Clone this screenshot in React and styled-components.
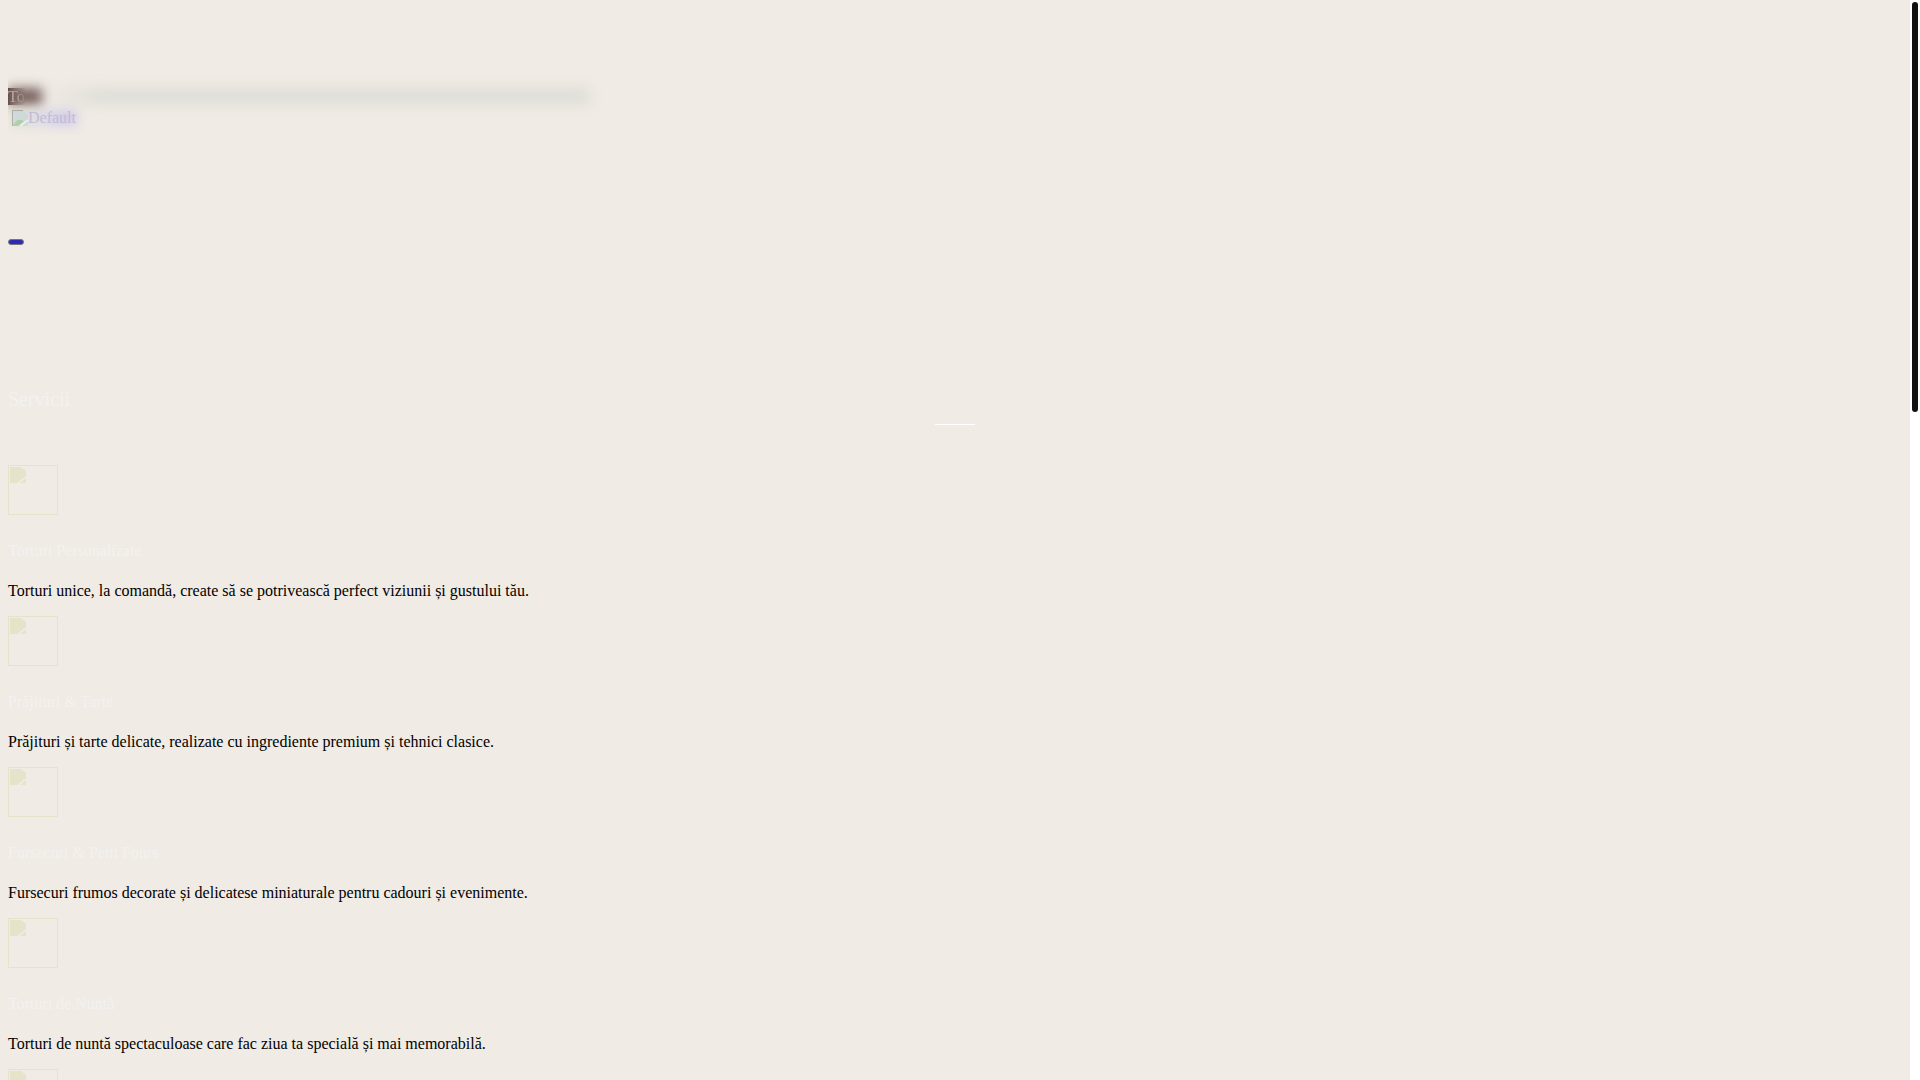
import React from "react";
import styled, { createGlobalStyle } from "styled-components";

const Global = createGlobalStyle`
  * { box-sizing: border-box; }
  body {
    margin: 0;
    background: #f0ebe4;
    color: #000;
    font: 16px/18px Times, "Liberation Serif", serif;
    overflow: hidden;
  }
`;
const Shell = styled.div`
  display: flex;
  height: 100vh;
  overflow: hidden;
`;
const Page = styled.div`
  flex: 1;
  min-width: 0;
  padding: 0 8px;
`;
const Rail = styled.div`
  width: 10px;
  padding: 2px;
  background: #fff;
`;
const Thumb = styled.div`
  height: 38vh;
  border-radius: 3px;
  background: #111;
`;
const Header = styled.header`
  height: 135px;
  padding-top: 88px;
  overflow: hidden;
`;
const TopLine = styled.div`
  display: grid;
  grid-template-columns: 34px 548px;
  height: 17px;
`;
const TagCell = styled.span`
  display: grid;
  & > * { grid-area: 1 / 1; }
`;
const TagGlow = styled.span`
  background: #77605c;
  filter: blur(6px);
`;
const TagBase = styled.span`
  width: 18px;
  background: linear-gradient(90deg, #5c403c, transparent);
`;
const Tag = styled.span`
  position: relative;
  line-height: 17px;
  color: #b3a9a4;
  mask-image: linear-gradient(90deg, #000 8px, transparent 20px);
`;
const Haze = styled.span`
  background: linear-gradient(90deg, transparent, #d3d4d0 60px);
  filter: blur(7px);
  opacity: 0.6;
`;
const Brand = styled.a`
  display: grid;
  grid-template-columns: 16px 48px;
  align-items: center;
  width: 64px;
  height: 18px;
  margin: 4px 0 0 4px;
  color: #c0bcd8;
  text-decoration: none;
`;
const BrandIcon = styled.svg`
  grid-area: 1 / 1;
  opacity: 0.6;
`;
const BrandGlow = styled.span`
  grid-area: 1 / 1 / 2 / 3;
  height: 14px;
  background: linear-gradient(90deg, #d3dfca 12px, #dcd8e6 24px, #c6c1e8);
  filter: blur(6px);
`;
const BrandText = styled.span`
  position: relative;
  grid-area: 1 / 2;
`;
const Main = styled.main`
  padding-top: 104px;
`;
const Pill = styled.button`
  display: block;
  width: 16px;
  height: 6px;
  padding: 0;
  border: 1px solid #76767a;
  border-radius: 3px;
  background: #3029b4;
`;
const Title = styled.h2`
  margin: 143px 0 0;
  font-size: 20px;
  line-height: 22px;
  font-weight: 400;
  color: #f3f2f1;
`;
const Rule = styled.hr`
  width: 40px;
  height: 1px;
  margin: 14px auto 40px;
  border: 0;
  background: #fff;
`;
const Service = styled.article`
  display: grid;
  gap: 22px;
  margin-bottom: 16px;
`;
const Frame = styled.div`
  width: 50px;
  height: 50px;
  margin-bottom: 5px;
  padding: 1px;
  border: 1px solid #e6e3cb;
  & > svg { display: block; }
`;
const Name = styled.h3`
  margin: 0;
  font-size: 16px;
  font-weight: 400;
  color: #f3f2f1;
`;
const Text = styled.p`
  margin: 0;
`;

const services = [
  ["Torturi Personalizate", "Torturi unice, la comandă, create să se potrivească perfect viziunii și gustului tău."],
  ["Prăjituri & Tarte", "Prăjituri și tarte delicate, realizate cu ingrediente premium și tehnici clasice."],
  ["Fursecuri & Petit Fours", "Fursecuri frumos decorate și delicatese miniaturale pentru cadouri și evenimente."],
  ["Torturi de Nuntă", "Torturi de nuntă spectaculoase care fac ziua ta specială și mai memorabilă."],
];

const ServiceIcon = () => (
  <Frame>
    <svg width="16" height="16" viewBox="0 0 16 16" aria-hidden="true">
      <path fill="#e6e3cb" d="M0 0h11l5 4v5L7 16H0zM16 11v5h-6z" />
    </svg>
  </Frame>
);

export default function App() {
  return (
    <Shell>
      <Global />
      <Page>
        <Header>
          <TopLine>
            <TagCell>
              <TagGlow />
              <TagBase />
              <Tag>To</Tag>
            </TagCell>
            <Haze />
          </TopLine>
          <Brand href="#">
            <BrandGlow />
            <BrandIcon width="16" height="16" viewBox="0 0 16 16" aria-hidden="true">
              <path fill="#c6d5dc" d="M0 0h11l5 5v11H0z" />
              <path fill="#8fc488" d="M1 15q4-6 8-5l3 1-6 5H1z" />
              <path fill="none" stroke="#8c8c8c" d="M0.500 16V0.500H11" />
              <path stroke="#fff" strokeWidth="1.500" d="M8 16l8-6" />
            </BrandIcon>
            <BrandText>Default</BrandText>
          </Brand>
        </Header>
        <Main>
          <Pill type="button" aria-label="Meniu" />
          <Title>Servicii</Title>
          <Rule />
          {services.map(([name, text]) => (
            <Service key={name}>
              <ServiceIcon />
              <Name>{name}</Name>
              <Text>{text}</Text>
            </Service>
          ))}
          <ServiceIcon />
        </Main>
      </Page>
      <Rail>
        <Thumb />
      </Rail>
    </Shell>
  );
}
